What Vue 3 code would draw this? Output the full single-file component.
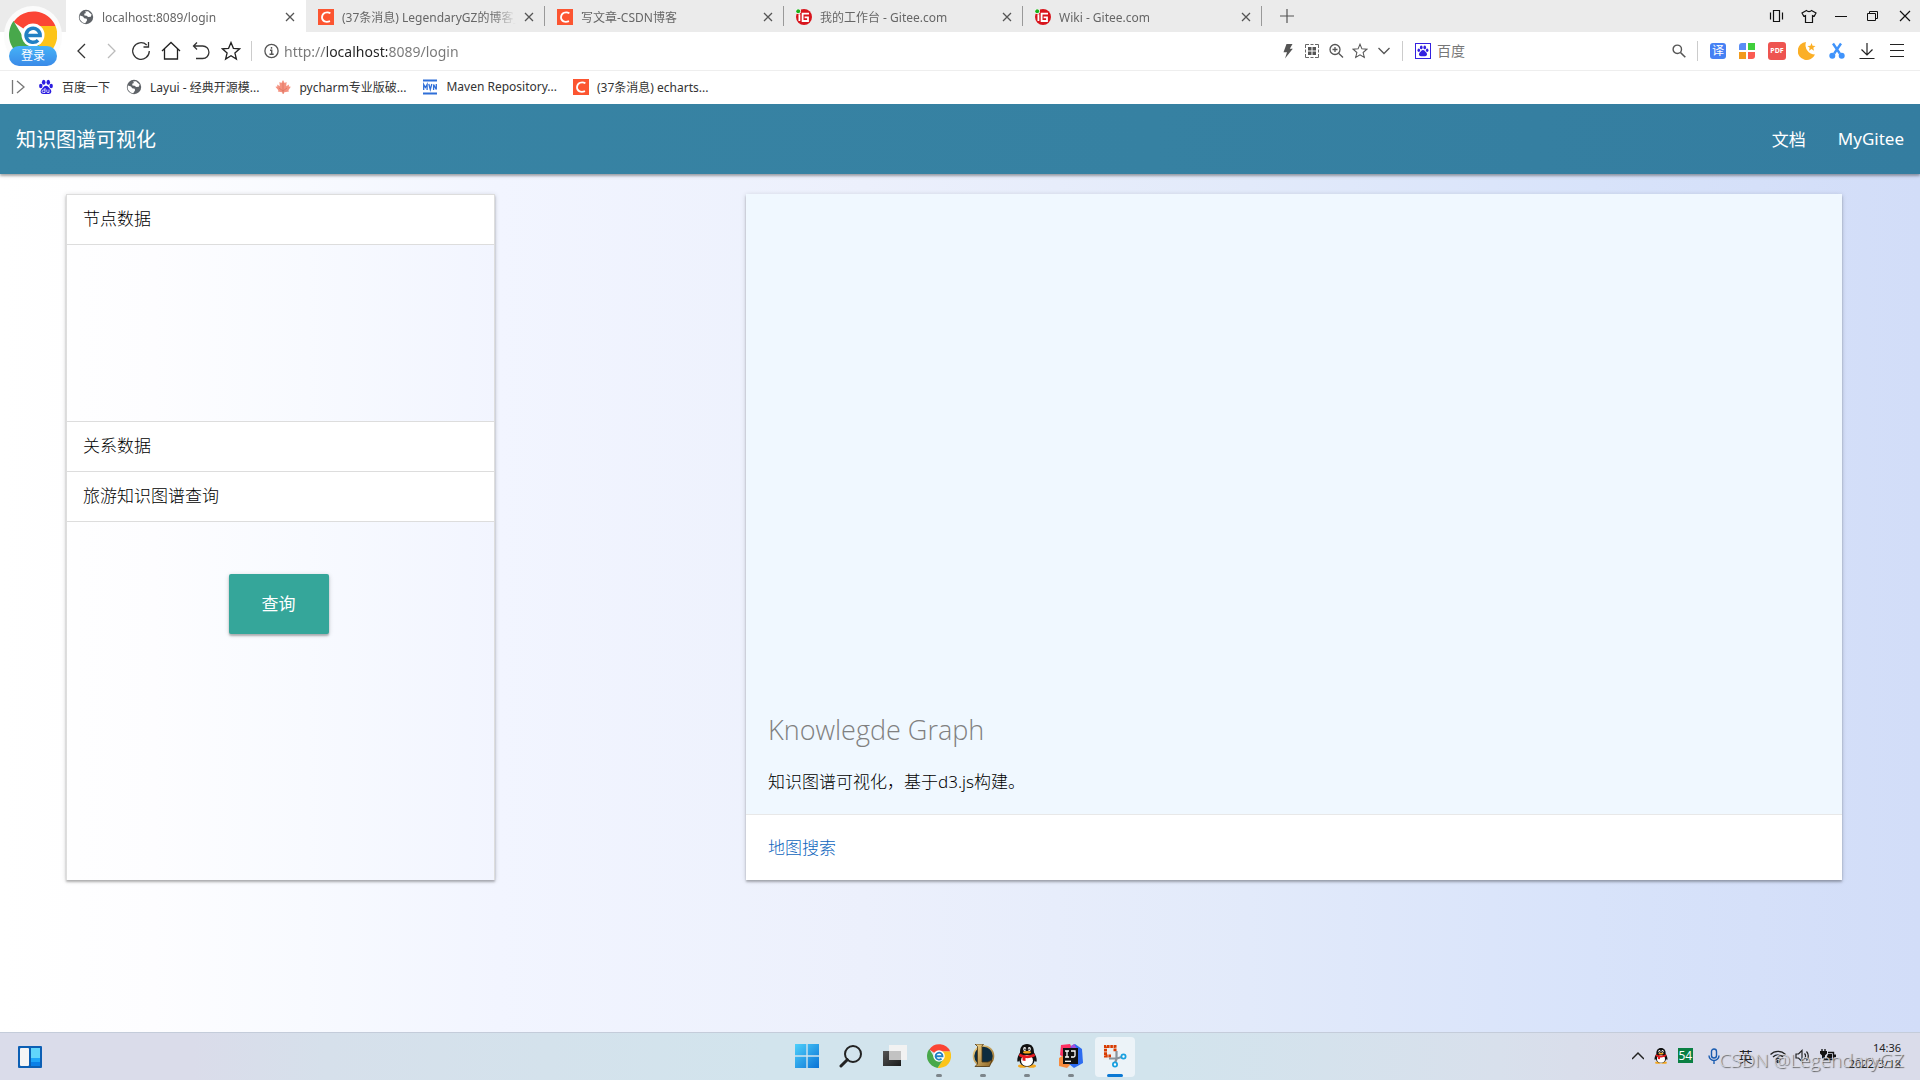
<script setup>
import { ref } from 'vue'

const tabs = [
  { title: 'localhost:8089/login', icon: 'globe', active: true },
  { title: '(37条消息) LegendaryGZ的博客_', icon: 'csdn' },
  { title: '写文章-CSDN博客', icon: 'csdn' },
  { title: '我的工作台 - Gitee.com', icon: 'gitee' },
  { title: 'Wiki - Gitee.com', icon: 'gitee' },
]

const bookmarks = [
  { title: '百度一下', icon: 'paw' },
  { title: 'Layui - 经典开源模...', icon: 'globe' },
  { title: 'pycharm专业版破...', icon: 'maple' },
  { title: 'Maven Repository...', icon: 'mvn' },
  { title: '(37条消息) echarts...', icon: 'csdn' },
]

const url = ref('http://localhost:8089/login')
const search = ref('')
</script>

<template>
  <div class="screen">
    <svg class="defs" width="0" height="0" aria-hidden="true">
      <defs>
        <linearGradient id="winGrad" x1="0" y1="0" x2="1" y2="1">
          <stop offset="0" stop-color="#4fd0fb" /><stop offset="1" stop-color="#0a72d6" />
        </linearGradient>
        <linearGradient id="darkGrad" x1="0" y1="0" x2="1" y2="1">
          <stop offset="0" stop-color="#555" /><stop offset="1" stop-color="#1b1b1b" />
        </linearGradient>
        <linearGradient id="goldGrad" x1="0" y1="0" x2="1" y2="1">
          <stop offset="0" stop-color="#f3d58a" /><stop offset="1" stop-color="#8d6424" />
        </linearGradient>
      </defs>
      <symbol id="globe" viewBox="0 0 16 16">
        <circle cx="8" cy="8" r="7.2" fill="#5f6368" />
        <path d="M2 6.4 5 7.6l1.2 1.6 2.6.6.2 1.6-1.8 2.9A6 6 0 0 1 2 6.4zM7 2.4l3-.1 3.6 3.2-.8 2.2-2.6.4-1.6-1.4-2.2-.3-.2-1.6L8 3.9z" fill="#fff" />
      </symbol>
      <symbol id="csdn" viewBox="0 0 16 16">
        <rect width="16" height="16" fill="#fc5531" />
        <path d="M12.4 4.2C9 2.300 4.200 3.600 4 8.200c0 4.400 4.200 5.400 8 3.900" fill="none" stroke="#fff" stroke-width="1.8" />
      </symbol>
      <symbol id="gitee" viewBox="0 0 16 16">
        <circle cx="8" cy="8" r="8" fill="#d8141c" />
        <circle cx="2.200" cy="2.200" r="2.800" fill="#fff" />
        <circle cx="2.200" cy="2.200" r="2" fill="#1ab21a" />
        <path d="M13 4.600H6.600V12H12V8.400H8.600M3.400 5.200V12" fill="none" stroke="#fff" stroke-width="1.800" />
      </symbol>
      <symbol id="paw" viewBox="0 0 16 16">
        <g fill="currentColor">
          <ellipse cx="5.700" cy="3.300" rx="1.800" ry="2.500" /><ellipse cx="10.300" cy="3.300" rx="1.800" ry="2.500" />
          <ellipse cx="2.400" cy="7" rx="1.700" ry="2.200" /><ellipse cx="13.600" cy="7" rx="1.700" ry="2.200" />
          <path d="M8 6.800c2 0 2.600 1.700 4 3 2.200 2 1.600 5.200-1.200 5.200H5.200C2.400 15 1.800 11.800 4 9.800c1.400-1.300 2-3 4-3z" />
        </g>
      </symbol>
      <symbol id="pawdu" viewBox="0 0 16 16">
        <g fill="#2b1de0">
          <ellipse cx="5.700" cy="3.300" rx="1.800" ry="2.500" /><ellipse cx="10.300" cy="3.300" rx="1.800" ry="2.500" />
          <ellipse cx="2.800" cy="7" rx="1.700" ry="2.200" /><ellipse cx="13.200" cy="7" rx="1.700" ry="2.200" />
          <path d="M8 6.800c2 0 2.600 1.700 4 3 2.200 2 1.600 5.200-1.200 5.200H5.200C2.400 15 1.800 11.800 4 9.800c1.400-1.300 2-3 4-3z" />
        </g>
        <path d="M7 9v4.500H5.300a1.200 1.200 0 0 1 0-2.500H7M8.800 10.500v2.300q0 .7.800.7H11v-3" fill="none" stroke="#fff" stroke-width=".8" />
      </symbol>
      <symbol id="maple" viewBox="0 0 16 16">
        <path d="M8 1l1.600 3 2-1-.4 4.200L14 5.600l-.2 1.800 2 .4-2.400 3.400.6 1.400-4.600.6-1 1.800-1.200-1.800-4.400-.6.6-1.400L.4 7.800l2-.4L2.200 5.600l2.600 1.600L4.400 3l2 1z" fill="#f4917f" />
        <path d="M8 4v11M8 12l4-3M8 12 4 9" stroke="#d9705c" stroke-width=".7" fill="none" />
      </symbol>
      <symbol id="mvn" viewBox="0 0 16 16">
        <path d="M1 1.500h14M1 14.500h14" stroke="#2f6fd8" stroke-width="2" />
        <path d="M1.700 11V5.500L3.400 8.500 5.100 5.500V11M6.800 5l1.500 5.500L9.800 5M11.600 11V5.500l2.700 5V5" fill="none" stroke="#2f6fd8" stroke-width="1.300" />
      </symbol>
      <symbol id="close" viewBox="0 0 10 10">
        <path d="M1 1l8 8M9 1L1 9" stroke="#555" stroke-width="1.300" />
      </symbol>
      <symbol id="star" viewBox="0 0 20 20">
        <path d="M10 1.500l2.400 5.800 6.200.5-4.700 4.100 1.500 6.100L10 14.700 4.600 18l1.500-6.100L1.400 7.800l6.200-.5z" fill="none" stroke="currentColor" stroke-width="1.300" />
      </symbol>
      <symbol id="chrome" viewBox="0 0 48 48">
        <path d="M24 24 4.500 11A24 24 0 0 1 46.500 15H24z" fill="#fb4535" />
        <path d="M24 24V15h22.500A24 24 0 0 1 21 47.800L33 30z" fill="#fcc419" />
        <path d="M24 24l9 6-12 17.800A24 24 0 0 1 4.500 10L16 29z" fill="#48a84b" />
        <circle cx="24" cy="24" r="11.500" fill="#fff" />
        <path d="M16.800 24.500h14.300a7 7 0 1 0-2 4.700" fill="none" stroke="#2180c4" stroke-width="3.600" />
      </symbol>
      <symbol id="penguin" viewBox="0 0 22 24">
        <ellipse cx="6.500" cy="22" rx="4.500" ry="1.800" fill="#f6a81c" /><ellipse cx="15.500" cy="22" rx="4.500" ry="1.800" fill="#f6a81c" />
        <path d="M11 0c5 0 7 3.500 7 8.500 1.500 2.500 3 5.500 2.700 8.500-.3 1.500-1.200.5-2-.6C18 20 15 22.500 11 22.500S4 20 3.300 16.400c-.8 1.100-1.700 2.100-2 .6C1 14 2.500 11 4 8.500 4 3.500 6 0 11 0z" fill="#111" />
        <ellipse cx="11" cy="16.500" rx="6" ry="5.600" fill="#fff" />
        <ellipse cx="8.700" cy="5" rx="1.500" ry="2.100" fill="#fff" /><ellipse cx="13.300" cy="5" rx="1.500" ry="2.100" fill="#fff" />
        <circle cx="9" cy="5.300" r=".8" /><circle cx="13" cy="5.300" r=".8" />
        <ellipse cx="11" cy="8.300" rx="4" ry="1.300" fill="#f6a81c" />
        <path d="M3.800 9.500c4 2.600 10.400 2.600 14.400 0l1 2.600c-3 1.700-6.500 2.300-9.700 2V17l-3-.4v-3c-1.300-.3-2.500-.8-3.700-1.500z" fill="#e61a1f" />
      </symbol>
    </svg>

    <header class="browser">
      <div class="tab-strip">
        <div
          v-for="tab in tabs"
          :key="tab.title"
          class="tab"
          :class="{ active: tab.active }"
        >
          <svg class="i16"><use :href="'#' + tab.icon" /></svg>
          <span class="tab-title">{{ tab.title }}</span>
          <button class="bare" aria-label="关闭标签页"><svg class="i10"><use href="#close" /></svg></button>
        </div>
        <button class="bare new-tab" aria-label="新标签页">
          <svg width="14" height="14" viewBox="0 0 14 14"><path d="M7 0v14M0 7h14" stroke="#555" stroke-width="1.200" /></svg>
        </button>
        <div class="window-controls">
          <button class="bare" aria-label="侧栏">
            <svg width="16" height="16" viewBox="0 0 16 16" fill="none" stroke="#111" stroke-width="1.200"><path d="M4.500 2.500h6v11h-6zM1.500 4.500v7M13.500 4.500v7" /></svg>
          </button>
          <button class="bare" aria-label="皮肤">
            <svg width="16" height="16" viewBox="0 0 16 16" fill="none" stroke="#111" stroke-width="1.200"><path d="M5.500 2.500 1 5l1.800 3.300 1.700-.7v6.900h7V7.600l1.700.7L15 5l-4.500-2.500c-1 1.400-4 1.400-5 0z" /></svg>
          </button>
          <button class="bare" aria-label="最小化">
            <svg width="16" height="16" viewBox="0 0 16 16"><path d="M2 8.500h12" stroke="#111" /></svg>
          </button>
          <button class="bare" aria-label="还原">
            <svg width="16" height="16" viewBox="0 0 16 16" fill="none" stroke="#111"><path d="M2.500 5.500h8v7h-8zM4.500 5.500v-2h8v7h-2" /></svg>
          </button>
          <button class="bare" aria-label="关闭">
            <svg width="16" height="16" viewBox="0 0 16 16"><path d="M3 3l10 10M13 3L3 13" stroke="#111" stroke-width="1.200" /></svg>
          </button>
        </div>
      </div>

      <div class="address-row">
        <div class="nav-buttons">
          <button class="bare" aria-label="后退"><svg width="20" height="20" viewBox="0 0 20 20" fill="none" stroke="#333" stroke-width="1.300"><path d="M14 3L7 10l7 7" /></svg></button>
          <button class="bare" aria-label="前进"><svg width="20" height="20" viewBox="0 0 20 20" fill="none" stroke="#bbb" stroke-width="1.300"><path d="M7 3l7 7-7 7" /></svg></button>
          <button class="bare" aria-label="刷新"><svg width="20" height="20" viewBox="0 0 20 20" fill="none" stroke="#333" stroke-width="1.300"><path d="M18.300 10a8.300 8.300 0 1 1-2.600-6M17.500 1v5h-5" /></svg></button>
          <button class="bare" aria-label="主页"><svg width="20" height="20" viewBox="0 0 20 20" fill="none" stroke="#222" stroke-width="1.300"><path d="M1 10l9-8.500L19 10M3.500 8v10h13V8" /></svg></button>
          <button class="bare" aria-label="撤销"><svg width="20" height="20" viewBox="0 0 20 20" fill="none" stroke="#333" stroke-width="1.300"><path d="M6 1.500 2.500 5 6 8.500M2.500 5h9.200a6 6 0 0 1 0 12.500H5" /></svg></button>
          <button class="bare dark" aria-label="收藏"><svg width="20" height="20"><use href="#star" /></svg></button>
        </div>
        <span class="divider"></span>
        <svg class="i16" viewBox="0 0 16 16"><circle cx="7.500" cy="8" r="6.600" fill="none" stroke="#555" stroke-width="1.300" /><path d="M7.500 4v1.800M6 7.300H7.700v4M5.500 11.300h4.200" stroke="#555" stroke-width="1.400" fill="none" /></svg>
        <input v-model="url" class="url" type="text" aria-label="地址栏" />
        <div class="page-tools">
          <svg class="i16" viewBox="0 0 16 16"><path d="M6.500 1h6L9.800 5.700h3L5 15.500l2-6.300H3.500z" fill="#555" /></svg>
          <svg class="i16" viewBox="0 0 16 16"><path d="M1.500 5V1.500H5M6.500 1.500h3M11 1.500h3.500V5M14.500 6.500v3M14.500 11v3.500H11M9.500 14.500h-3M5 14.500H1.500V11M1.500 9.500v-3" fill="none" stroke="#666" /><path d="M4 4h3.500v3.500H4zM8.500 4H12v3.500H8.500zM4 8.500h3.500V12H4zM8.500 8.500H12V12H8.500z" fill="#555" /></svg>
          <svg class="i16" viewBox="0 0 16 16" fill="none" stroke="#555" stroke-width="1.300"><circle cx="7" cy="6.500" r="5" /><path d="M10.600 10.200 15 14.500M4.500 6.500h5M7 4v5" /></svg>
          <svg class="i16 grey"><use href="#star" /></svg>
          <svg class="i16" viewBox="0 0 16 16"><path d="M2.500 5 8 10.500 13.500 5" fill="none" stroke="#555" stroke-width="1.300" /></svg>
        </div>
        <span class="divider"></span>
        <label class="search">
          <span class="engine"><svg width="12" height="12"><use href="#paw" /></svg></span>
          <input v-model="search" type="text" placeholder="百度" aria-label="百度" />
          <svg class="i16" viewBox="0 0 16 16"><circle cx="6.300" cy="6.300" r="4.200" fill="none" stroke="#555" stroke-width="1.400" /><path d="M9.500 9.500l4.800 4.800" stroke="#555" stroke-width="1.600" /></svg>
        </label>
        <span class="divider"></span>
        <div class="extensions">
          <span class="translate">译</span>
          <svg width="18" height="18" viewBox="0 0 18 18"><path d="M1 4a3 3 0 0 1 3-3h4v7H1z" fill="#5a8df5" /><path d="M10 1h7v7h-7z" fill="#40cf3c" /><path d="M1 10h7v7H1z" fill="#f29b1d" /><path d="M10 10h7v4a3 3 0 0 1-3 3h-4z" fill="#fb5b52" /></svg>
          <span class="pdf">PDF</span>
          <svg width="18" height="18" viewBox="0 0 18 18"><path d="M8 0a9.500 9.500 0 0 0 9 12.500A9 9 0 1 1 8 0z" fill="#fbaf26" /><path d="M13.500 1l1.100 2.700 2.900.2-2.200 1.900.7 2.900-2.500-1.600L11 8.700l.7-2.900-2.200-1.900 2.900-.2z" fill="#fbaf26" /></svg>
          <svg width="18" height="18" viewBox="0 0 18 18"><path d="M5 1.500l6.800 10M13 1.500l-6.800 10" stroke="#3f93fb" stroke-width="2.400" /><circle cx="4.300" cy="13.700" r="3" fill="#3f93fb" /><circle cx="13.700" cy="13.700" r="3" fill="#3f93fb" /></svg>
          <svg width="18" height="18" viewBox="0 0 18 18" fill="none" stroke="#222" stroke-width="1.200"><path d="M9 1v12M3.500 7.500 9 13l5.500-5.500M1.500 16.500h15" /></svg>
          <svg width="18" height="18" viewBox="0 0 18 18" stroke="#222" stroke-width="1.200"><path d="M2 2.500h14M2 8.500h14M2 14.500h14" /></svg>
        </div>
      </div>

      <nav class="bookmarks">
        <svg class="expand" width="16" height="16" viewBox="0 0 16 16" fill="none" stroke="#777" stroke-width="1.300"><path d="M1.500 1v14M6 2l7 6-7 6" /></svg>
        <a v-for="mark in bookmarks" :key="mark.title" href="#">
          <svg class="i16"><use :href="mark.icon === 'paw' ? '#pawdu' : '#' + mark.icon" /></svg>
          <span>{{ mark.title }}</span>
        </a>
      </nav>

      <a class="account" href="#">
        <svg width="48" height="48"><use href="#chrome" /></svg>
        <span>登录</span>
      </a>
    </header>

    <div class="page">
      <nav class="navbar">
        <a class="brand" href="#">知识图谱可视化</a>
        <a href="#">文档</a>
        <a href="#">MyGitee</a>
      </nav>

      <main class="content">
        <section class="data-panel">
          <h2>节点数据</h2>
          <div class="node-body"></div>
          <h2>关系数据</h2>
          <h2>旅游知识图谱查询</h2>
          <div class="query-body">
            <button class="query">查询</button>
          </div>
        </section>

        <section class="graph-card">
          <div class="graph-area">
            <h1>Knowlegde Graph</h1>
            <p>知识图谱可视化，基于d3.js构建。</p>
          </div>
          <div class="card-action"><a href="#">地图搜索</a></div>
        </section>
      </main>
    </div>

    <footer class="taskbar">
      <div class="widgets">
        <svg width="24" height="22" viewBox="0 0 24 22"><rect width="24" height="22" rx="1" fill="#0c5fb4" /><rect x="2" y="2" width="9" height="18" rx="1" fill="#f5f5f5" /><path d="M13 2h9v10h-9z" fill="#62d6fb" /><path d="M13 12h9v4h-9z" fill="#1ea5f8" /><path d="M13 16h9v4h-9z" fill="#0a80e8" /></svg>
      </div>
      <div class="apps">
        <button class="app" aria-label="开始">
          <svg width="24" height="24" viewBox="0 0 24 24"><path d="M0 0h11.300v11.300H0zM12.700 0H24v11.300H12.700zM0 12.700h11.300V24H0zM12.700 12.700H24V24H12.700z" fill="url(#winGrad)" /></svg>
        </button>
        <button class="app" aria-label="搜索">
          <svg width="24" height="24" viewBox="0 0 24 24" fill="none" stroke="#222"><circle cx="14" cy="10" r="8" stroke-width="2" /><path d="M8.300 15.700 2 22" stroke-width="3" stroke-linecap="round" /></svg>
        </button>
        <button class="app" aria-label="任务视图">
          <svg width="24" height="24" viewBox="0 0 24 24"><rect y="7" width="18" height="15" fill="url(#darkGrad)" /><rect x="6" y="1" width="18" height="15" fill="#f2f2f2" /><path d="M6 7h12v9H6z" fill="#c2c2c2" /></svg>
        </button>
        <button class="app running" aria-label="浏览器"><svg width="24" height="24"><use href="#chrome" /></svg></button>
        <button class="app running" aria-label="游戏">
          <svg width="24" height="24" viewBox="0 0 24 24"><circle cx="12.500" cy="12" r="10" fill="#0d2c3f" stroke="url(#goldGrad)" stroke-width="1.600" /><path d="M4 0h8.500L11 2v16h6l4-2-2.500 6.500H4L6.500 20V2.500z" fill="url(#goldGrad)" stroke="#4c3511" stroke-width=".8" /></svg>
        </button>
        <button class="app running" aria-label="QQ"><svg width="22" height="24"><use href="#penguin" /></svg></button>
        <button class="app running" aria-label="IntelliJ IDEA">
          <svg width="24" height="24" viewBox="0 0 24 24"><path d="M2 1l9-1 3 6-8 8-5-3z" fill="#fc3163" /><path d="M0 14l5-3 8 8-5 5-8-2z" fill="#f88b3e" /><path d="M12 2l4-2 7 5 1 14-9 5-5-4z" fill="#2d6cf0" /><path d="M11 3l4-3 3 5z" fill="#a84bdc" /><rect x="4" y="4" width="15" height="16" fill="#111" /><path d="M6 7h4M8 7v6M6 13h4M12 7h4v4.500q0 1.500-1.500 1.500H12" fill="none" stroke="#fff" stroke-width="1.300" /><path d="M6 17.300h6" stroke="#fff" stroke-width="1.300" /></svg>
        </button>
        <button class="app running current" aria-label="截图工具">
          <svg width="24" height="24" viewBox="0 0 24 24"><rect y="1" width="14" height="15" fill="#eceff1" /><path d="M8 12H2.500V2.500H12V8" fill="none" stroke="#d83b01" stroke-width="3" stroke-dasharray="2.600 .7" /><path d="M13.500 7v8l-1.500 4M6 14.500h8l6-2" fill="none" stroke="#8a939b" stroke-width="2.200" /><circle cx="12" cy="20.500" r="2.100" fill="#fff" stroke="#18a0e0" stroke-width="1.800" /><circle cx="20.500" cy="12.500" r="2.100" fill="#fff" stroke="#18a0e0" stroke-width="1.800" /></svg>
        </button>
      </div>
      <div class="tray">
        <svg width="12" height="12" viewBox="0 0 12 12"><path d="M0 9l6-6 6 6" fill="none" stroke="#222" stroke-width="1.500" /></svg>
        <svg width="16" height="16"><use href="#penguin" /></svg>
        <span class="temp">54</span>
        <svg class="mic" width="12" height="16" viewBox="0 0 12 16" fill="none" stroke="#1a5cb0" stroke-width="1.400"><rect x="3.500" y="1" width="5" height="9" rx="2.500" /><path d="M1 7.500a5 5 0 0 0 10 0M6 12.500V16" /></svg>
        <span class="ime">英</span>
        <svg class="wifi" width="16" height="16" viewBox="0 0 16 16" fill="none" stroke="#222" stroke-width="1.300"><path d="M.5 6.500a10.500 10.500 0 0 1 15 0M3 9a7 7 0 0 1 10 0M5.500 11.500a3.500 3.500 0 0 1 5 0" /><circle cx="8" cy="13.500" r="1" fill="#222" /></svg>
        <svg width="16" height="16" viewBox="0 0 16 16" fill="none" stroke="#222" stroke-width="1.200"><path d="M1 6v4h2.500L7 13.500v-11L3.500 6zM9.500 5.500a3.500 3.500 0 0 1 0 5M11.500 3.500a6.500 6.500 0 0 1 0 9" /></svg>
        <svg width="16" height="16" viewBox="0 0 16 16"><path d="M2 1v3M5 1v3" stroke="#111" stroke-width="1.300" /><path d="M0 3h7v2.500L5 7.500v3H2v-3L0 5.500z" fill="#111" /><path d="M8 4.500h5.500v7H4" fill="none" stroke="#111" stroke-width="1.400" /><path d="M8 6h4v4.500H6z" fill="#111" /><rect x="14" y="6.500" width="2" height="3" fill="#111" /></svg>
        <div class="clock"><span>14:36</span><span>2022/3/18</span></div>
      </div>
      <div class="watermark">CSDN @LegendaryGZ</div>
    </footer>
  </div>
</template>

<style>
body {
  margin: 0;
}
</style>

<style scoped>
.screen {
  display: flex;
  flex-direction: column;
  min-height: 100vh;
  font-family: "Noto Sans", "Noto Sans CJK SC", sans-serif;
  font-size: 12px;
  color: #333;
  background: linear-gradient(90deg, #fff 0%, #fdfdff 8%, #f8faff 16%, #f2f5ff 26%, #ecf0fc 45%, #e2eafa 65%, #d8e3fa 83%, #d2ddf8 100%);
}
.screen * {
  box-sizing: border-box;
}
.defs {
  position: absolute;
}
a {
  color: inherit;
  text-decoration: none;
}
svg {
  display: block;
  flex: none;
}
.bare {
  display: flex;
  padding: 0;
  border: 0;
  background: none;
}
.i16 {
  width: 16px;
  height: 16px;
}
.i10 {
  width: 10px;
  height: 10px;
}
.grey {
  color: #555;
}
.dark {
  color: #222;
}

.browser {
  position: relative;
  background: #fff;
}
.tab-strip {
  display: flex;
  height: 32px;
  padding-left: 66px;
  background: #ebebeb;
}
.tab {
  position: relative;
  display: flex;
  align-items: center;
  gap: 8px;
  width: 239px;
  height: 32px;
  padding: 2px 11px 0 12px;
  color: #666;
}
.tab.active {
  width: 240px;
  background: #fff;
}
.tab:not(.active)::after {
  content: "";
  position: absolute;
  right: 0;
  top: 6px;
  width: 1px;
  height: 20px;
  background: #999;
}
.tab-title {
  flex: 1;
  overflow: hidden;
  white-space: nowrap;
  mask-image: linear-gradient(to left, transparent 0, #000 24px);
}
.new-tab {
  align-items: center;
  margin-left: 18px;
}
.window-controls {
  display: flex;
  align-items: center;
  gap: 16px;
  margin-left: auto;
  padding-right: 7px;
}

.address-row {
  display: flex;
  align-items: center;
  height: 39px;
  padding: 0 14px 0 71px;
  border-bottom: 1px solid #eee;
}
.nav-buttons {
  display: flex;
  gap: 10px;
}
.divider {
  width: 1px;
  height: 20px;
  margin: 0 12px 0 10px;
  background: #ccc;
}
input {
  min-width: 0;
  padding: 0;
  border: 0;
  outline: 0;
  background: none;
  font: inherit;
}
.url {
  flex: 1;
  margin-left: 4px;
  font-size: 14px;
  color: transparent;
  background: linear-gradient(90deg, #777 0, #777 43px, #222 43px, #222 103px, #777 103px);
  background-clip: text;
}
.page-tools {
  display: flex;
  gap: 8px;
}
.search {
  display: flex;
  align-items: center;
  width: 272px;
}
.engine {
  display: flex;
  align-items: center;
  justify-content: center;
  width: 16px;
  height: 16px;
  border: 1px solid #3321e0;
  color: #3321e0;
}
.search input {
  flex: 1;
  margin-left: 6px;
  padding-bottom: 2px;
  font-size: 14px;
}
.search input::placeholder {
  color: #777;
}
.extensions {
  display: flex;
  align-items: center;
  gap: 12px;
}
.translate {
  width: 16px;
  border-radius: 3px;
  background: #4681f4;
  color: #fff;
  font-size: 12px;
  line-height: 16px;
  text-align: center;
}
.pdf {
  width: 18px;
  border-radius: 3px;
  background: #ee5450;
  color: #fff;
  font-size: 7px;
  font-weight: 700;
  line-height: 18px;
  text-align: center;
}

.bookmarks {
  display: flex;
  align-items: center;
  height: 33px;
  padding: 0 0 2px 11px;
}
.expand {
  margin-right: 11px;
}
.bookmarks a {
  display: flex;
  align-items: center;
  gap: 8px;
  margin-right: 16px;
}
.account {
  position: absolute;
  left: 4px;
  top: 6px;
  display: flex;
  flex-direction: column;
  align-items: center;
  width: 58px;
  height: 60px;
  padding-top: 5px;
  border-radius: 30px;
  background: #fbfbfb;
}
.account span {
  z-index: 1;
  width: 48px;
  margin-top: -13px;
  border-radius: 10px;
  background: linear-gradient(#45b2f7, #3a8ae8);
  color: #fff;
  line-height: 20px;
  text-align: center;
}

.page {
  flex: 1;
  font-size: 17px;
}
.navbar {
  display: flex;
  align-items: center;
  gap: 32px;
  height: 70px;
  padding: 0 16px 2px;
  color: #fff;
  background: linear-gradient(90deg, #3884a4, #3681a2 60%, #347da0);
  box-shadow: 0 2px 2px rgba(0, 0, 0, .24), 0 1px 5px rgba(0, 0, 0, .2);
}
.brand {
  margin-right: auto;
  font-size: 20px;
}
.content {
  display: grid;
  grid-template-columns: 429fr 251fr 1096fr;
  padding: 20px 78px 0 66px;
}
.data-panel {
  border: 1px solid #ddd;
  border-bottom: 0;
  box-shadow: 0 2px 2px rgba(0, 0, 0, .24), 0 1px 5px rgba(0, 0, 0, .16);
}
.data-panel h2 {
  height: 50px;
  margin: 0;
  padding: 0 16px;
  border-bottom: 1px solid #ddd;
  background: #fff;
  color: #000;
  font-size: 17px;
  font-weight: 300;
  line-height: 48px;
}
.node-body {
  height: 177px;
  border-bottom: 1px solid #ddd;
}
.query-body {
  height: 358px;
  padding: 52px 4px 0 0;
}
.query {
  display: block;
  width: 100px;
  height: 60px;
  margin: 0 auto;
  padding: 0 0 4px;
  border: 0;
  border-radius: 2px;
  background: #35a69a;
  color: #fff;
  font: 17px "Noto Sans", "Noto Sans CJK SC", sans-serif;
  box-shadow: 0 2px 2px rgba(0, 0, 0, .24), 0 1px 5px rgba(0, 0, 0, .16);
}
.graph-card {
  grid-column: 3;
  display: flex;
  flex-direction: column;
  background: #fff;
  box-shadow: 0 2px 2px rgba(0, 0, 0, .24), 0 1px 5px rgba(0, 0, 0, .16);
}
.graph-area {
  display: flex;
  flex: 1;
  flex-direction: column;
  justify-content: flex-end;
  padding: 0 22px 20px;
  background: #f0f8ff;
}
.graph-area h1 {
  margin: 0 0 20px;
  color: #808080;
  font-family: "Open Sans", sans-serif;
  font-size: 27px;
  font-weight: 300;
  line-height: 40px;
}
.graph-area p {
  margin: 0;
  color: #000;
  line-height: 24px;
  font-weight: 300;
}
.card-action {
  padding: 20px 22px;
  border-top: 1px solid #e8e8e8;
  color: #0f66bd;
  font-weight: 300;
  line-height: 25px;
}

.taskbar {
  position: relative;
  display: grid;
  grid-template-columns: 1fr auto 1fr;
  align-items: center;
  height: 48px;
  border-top: 1px solid #c4ccda;
  background: linear-gradient(90deg, #dadcea 0%, #dadcea 10%, #d6e0eb 17%, #d2e4ed 40%, #d2e4ed 60%, #d8e0ec 78%, #dadcea 86%, #dadcea 100%);
}
.widgets {
  padding-left: 18px;
}
.apps {
  display: flex;
  gap: 4px;
  padding-left: 2px;
}
.app {
  position: relative;
  display: flex;
  align-items: center;
  justify-content: center;
  width: 40px;
  height: 40px;
  padding: 0 0 2px;
  border: 0;
  border-radius: 4px;
  background: none;
}
.app.current {
  background: #ecf3f8;
}
.running::after {
  content: "";
  position: absolute;
  bottom: 0;
  width: 6px;
  height: 3px;
  border-radius: 2px;
  background: #7d858b;
}
.running.current::after {
  width: 16px;
  background: #0a78d4;
}
.tray {
  display: flex;
  align-items: center;
  justify-content: flex-end;
  gap: 9px;
  padding: 0 19px 2px 0;
  color: #222;
}
.temp {
  width: 15px;
  background: #0a8043;
  color: #fff;
  line-height: 15px;
  text-align: center;
}
.mic {
  margin: 0 10px 0 6px;
}
.ime {
  font-size: 14px;
}
.wifi {
  margin-left: 8px;
}
.clock {
  display: flex;
  flex-direction: column;
  align-items: flex-end;
  margin-left: 4px;
  font-size: 11px;
  line-height: 16px;
}
.watermark {
  position: absolute;
  right: 16px;
  bottom: 6px;
  color: rgba(225, 225, 230, .85);
  font-family: "Open Sans", sans-serif;
  font-size: 19px;
  font-weight: 300;
  line-height: 28px;
  text-shadow: 1px 1px 1px #555;
}
</style>
